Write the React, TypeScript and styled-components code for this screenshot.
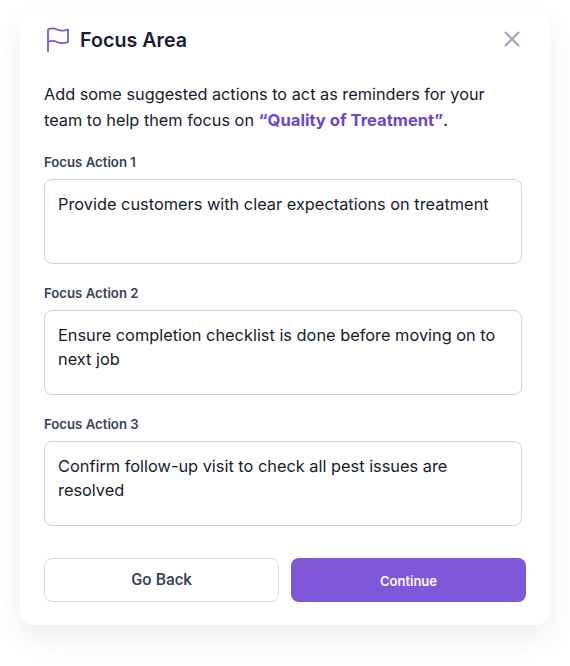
import styled, { createGlobalStyle } from "styled-components";

const GlobalStyle = createGlobalStyle`
  html, body {
    margin: 0;
    padding: 0;
    background: #fff;
  }
  body {
    font-family: "Inter", "Liberation Sans", sans-serif;
    color: #151c2c;
  }
`;

const Page = styled.div`
  width: 570px;
  height: 666px;
  padding-top: 14px;
  padding-left: 20px;
  box-sizing: border-box;
  overflow: hidden;
`;
const Card = styled.div`
  width: 530px;
  height: 611px;
  box-sizing: border-box;
  padding: 10px 24px 0;
  background: #fff;
  border-radius: 14px;
  box-shadow: 0 12px 28px rgba(40, 50, 70, 0.09);
`;
const Header = styled.div`
  display: flex;
  align-items: center;
  height: 32px;
  padding-left: 2px;
  padding-right: 6px;
`;
const Title = styled.h2`
  margin: 0 0 0 10px;
  flex: 1;
  font-size: 19.7px;
  font-weight: 600;
  color: #171e2e;
`;
const CloseButton = styled.button`
  display: flex;
  padding: 0;
  border: 0;
  background: none;
  margin-top: -3px;
  cursor: pointer;
`;
const Intro = styled.p`
  margin: 25px 0 0;
  font-size: 16.3px;
  line-height: 26px;
  color: #151c2c;
`;
const Accent = styled.strong`
  font-size: 16.6px;
  font-weight: 700;
  color: #6d45cf;
`;
const Fields = styled.div`
  margin-top: 21px;
  display: grid;
  gap: 21px;
  width: 478px;
`;
const Field = styled.div`
  display: grid;
  gap: 8px;
`;
const Label = styled.label`
  font-size: 13.2px;
  line-height: 17px;
  font-weight: 600;
  color: #36435a;
`;
const Box = styled.div`
  height: 85px;
  box-sizing: border-box;
  padding: 12px 13px;
  border: 1px solid #cdd2da;
  border-radius: 8px;
  font-size: 16.35px;
  line-height: 24px;
  color: #151c2c;
`;
const Actions = styled.div`
  display: flex;
  gap: 12px;
  margin-top: 32px;
`;
const Button = styled.button`
  width: 235px;
  height: 44px;
  box-sizing: border-box;
  border-radius: 8px;
  cursor: pointer;
`;
const BackButton = styled(Button)`
  border: 1px solid #d5d9e2;
  background: #fff;
  color: #36435a;
  font-family: "Roboto", sans-serif;
  font-size: 16.3px;
  font-weight: 500;
  padding-bottom: 3px;
`;
const ContinueButton = styled(Button)`
  border: 0;
  background: #7f58d9;
  color: #fff;
  font-family: "Inter", sans-serif;
  font-size: 13px;
  font-weight: 600;
  padding-top: 2px;
`;

const FlagIcon = () => (
  <svg width="24" height="26" viewBox="0 0 24 26" fill="none" stroke="#7c55da" strokeWidth="1.8">
    <path d="M2 25V2.5C5 1 8 1 11 2.5C14 4 18 4 22 2.5V15C18 16.5 14 16.5 11 15C8 13.5 5 13.5 2 15" strokeLinejoin="round" />
  </svg>
);

const CloseIcon = () => (
  <svg width="16" height="16" viewBox="0 0 16 16" fill="none" stroke="#9aa3b2" strokeWidth="2">
    <path d="M1 1L15 15M15 1L1 15" />
  </svg>
);

const actions = [
  "Provide customers with clear expectations on treatment",
  "Ensure completion checklist is done before moving on to next job",
  "Confirm follow-up visit to check all pest issues are resolved",
];

export default function App() {
  return (
    <>
      <GlobalStyle />
      <Page>
        <Card>
          <Header>
            <FlagIcon />
            <Title>Focus Area</Title>
            <CloseButton>
              <CloseIcon />
            </CloseButton>
          </Header>
          <Intro>
            Add some suggested actions to act as reminders for your team to help them focus on{" "}
            <Accent>“Quality of Treatment”</Accent>.
          </Intro>
          <Fields>
            {actions.map((action, i) => (
              <Field key={action}>
                <Label>Focus Action {i + 1}</Label>
                <Box>{action}</Box>
              </Field>
            ))}
          </Fields>
          <Actions>
            <BackButton>Go Back</BackButton>
            <ContinueButton>Continue</ContinueButton>
          </Actions>
        </Card>
      </Page>
    </>
  );
}
